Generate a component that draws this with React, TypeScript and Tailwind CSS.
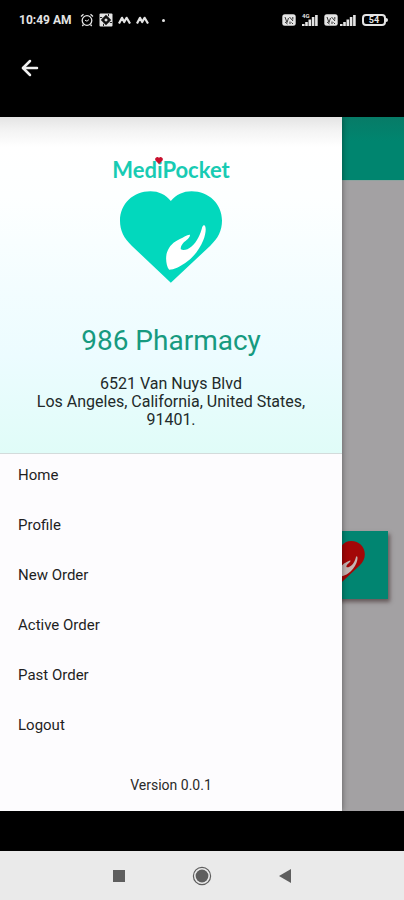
import { ArrowLeft } from "lucide-react";

const MENU_ITEMS = ["Home", "Profile", "New Order", "Active Order", "Past Order", "Logout"];

function HeartHand({ className, handClassName }: { className: string; handClassName: string }) {
  return (
    <svg viewBox="91 153 305 274" className={className} fill="currentColor" aria-hidden="true">
      <path d="M243 182C227 163 207 153 182 153C130 153 91 191 91 241C91 272 103 294 126 316L243 427L361 316C384 294 396 272 396 241C396 191 357 153 305 153C280 153 259 163 243 182Z" />
      <path
        className={handClassName}
        d="M343 255C350 259 348 279 340 300C329 328 309 352 286 368C270 379 253 388 238 388C229 378 226 350 232 335C238 317 251 305 270 296C282 290 292 282 300 283C302 291 290 299 282 306C276 312 271 321 273 327C281 332 295 327 304 319C323 303 331 282 337 260C339 256 341 254 343 255Z"
      />
    </svg>
  );
}

function AlarmIcon() {
  return (
    <svg viewBox="0 0 14 14" className="size-[14px]" fill="none" stroke="currentColor" strokeWidth="1.3">
      <circle cx="7" cy="7.5" r="4.8" />
      <path d="M1 3.5L3.5 1.2M13 3.5L10.5 1.2M3.5 11.5L2.3 13M10.5 11.5L11.7 13" />
      <path d="M5 7.2L7 8.2L9 6.5" strokeWidth="1" />
    </svg>
  );
}

function AppIcon() {
  return (
    <svg viewBox="0 0 14 14" className="size-[14px]">
      <rect x="0.5" y="0.5" width="13" height="13" rx="1" fill="currentColor" />
      <path d="M7 2.8L11.2 7L7 11.2L2.8 7Z" fill="#111" stroke="#111" strokeWidth="1.4" />
      <path d="M7 5.2L8.8 7L7 8.8L5.2 7Z" fill="currentColor" />
      <path d="M1 4.5H3.2M10.8 9.5H13M9.5 1V3.2M4.5 10.8V13" stroke="#111" strokeWidth="0.9" />
    </svg>
  );
}

function WaveIcon() {
  return (
    <svg viewBox="0 0 13 8" className="h-2 w-[13px]" fill="none" stroke="currentColor" strokeWidth="2.2">
      <path d="M1 7.5L4 1.8L6.2 6L8.6 1.8L12 7.5" strokeLinejoin="round" />
    </svg>
  );
}

function VolteIcon() {
  return (
    <svg viewBox="0 0 14 12" className="h-3 w-[14px]">
      <rect x="0.3" y="0.3" width="13.4" height="11.4" rx="2.5" fill="currentColor" />
      <path d="M3 3L5 8.5L6.5 4M3 8L5.5 10M7.5 3L11 7M8 7.5V10M10.8 3V5.5M9.5 8.5L11 10" stroke="#333" fill="none" />
    </svg>
  );
}

function SignalIcon() {
  return (
    <svg viewBox="0 0 16 12" className="h-3 w-4" fill="currentColor">
      <path d="M0 10H2.6V12H0ZM3.2 8H5.8V12H3.2ZM6.5 5.5H9.1V12H6.5ZM9.8 3H12.4V12H9.8ZM13.1 1H15.7V12H13.1Z" />
    </svg>
  );
}

function StatusBar() {
  return (
    <div className="flex h-10 items-center justify-between pr-4 pl-[19px] text-[#e4e4e4]">
      <div className="flex items-center gap-[5px]">
        <span className="mr-1 text-xs font-bold">10:49 AM</span>
        <AlarmIcon />
        <AppIcon />
        <WaveIcon />
        <WaveIcon />
        <span className="ml-2 size-[3px] rounded-full bg-current" />
      </div>
      <div className="flex items-center gap-[2px]">
        <VolteIcon />
        <div className="relative ml-1">
          <SignalIcon />
          <span className="absolute -top-px left-0 text-[6px] leading-[6px] font-bold">4G</span>
        </div>
        <div className="ml-1">
          <VolteIcon />
        </div>
        <SignalIcon />
        <div className="ml-1 flex items-center">
          <span className="flex h-3 w-6 items-center justify-center rounded-[4px] border-2 border-current text-[9px] leading-[9px] font-bold">
            54
          </span>
          <span className="h-1 w-[2px] rounded-r-sm bg-current" />
        </div>
      </div>
    </div>
  );
}

function Wordmark() {
  return (
    <div className="relative font-[Lato] text-[22px] leading-[26px] font-bold text-[#18cbb3]">
      MediPocket
      {/* little heart sits on the dot of the i */}
      <svg viewBox="0 0 8 7" className="absolute top-0 left-[43px] h-[7px] w-2" fill="#c8102e" aria-hidden="true">
        <path d="M4 7L0.7 3.8C-0.8 1.8 1 0 2.4 0C3.2 0 3.7 0.4 4 0.9C4.3 0.4 4.8 0 5.6 0C7 0 8.8 1.8 7.3 3.8Z" />
      </svg>
    </div>
  );
}

function Drawer() {
  return (
    <aside className="z-10 col-start-1 row-start-1 flex w-[342px] max-w-[85%] flex-col bg-[#fdfcfe] shadow-[0_0_6px_rgba(0,0,0,0.45)]">
      <header className="flex flex-col items-center border-b border-[#d3dbdb] bg-[linear-gradient(to_bottom,#e4e4e4_0,#f4f4f4_14px,#fff_30px,#fdffff_80px,#f3fdff_170px,#ecfcff_240px,#e0fcf8_100%)] px-8 pt-10 pb-6 text-center">
        <Wordmark />
        <HeartHand className="mt-2 h-[92px] w-[102px] text-[#02d8bd]" handClassName="fill-white" />
        <h1 className="mt-10 text-[28px] leading-9 text-[#169a80]">986 Pharmacy</h1>
        <address className="mt-4 text-base leading-[18px] text-[#222a2a] not-italic">
          6521 Van Nuys Blvd
          <br />
          Los Angeles, California, United States, 91401.
        </address>
      </header>
      <nav className="flex flex-col gap-2">
        {MENU_ITEMS.map((item) => (
          <button key={item} type="button" className="h-[42px] pl-[18px] text-left text-[15px] text-[#1f1f1f]">
            {item}
          </button>
        ))}
      </nav>
      <p className="mt-auto pb-4 text-center text-sm text-[#2a2a2a]">Version 0.0.1</p>
    </aside>
  );
}

function DimmedPage() {
  return (
    <div className="col-start-1 row-start-1 flex flex-col bg-[#a3a1a3]">
      <div className="h-16 border-b border-[#8fa39f] bg-[linear-gradient(to_bottom,#077b67,#00856f_24px)]" />
      <div className="flex flex-1 flex-col items-end justify-end pr-4 pb-[212px]">
        <div className="flex h-[68px] w-28 items-center justify-center bg-[#018571] pb-2 pl-5 shadow-[2px_3px_4px_rgba(60,40,40,0.6)]">
          <HeartHand className="h-[41px] w-[46px] text-[#a30707]" handClassName="fill-[#c4b4b2]" />
        </div>
      </div>
    </div>
  );
}

function SystemNav() {
  return (
    <footer className="flex h-[49px] justify-center bg-[#eaeaea] text-[#5e5e5e]">
      <button type="button" aria-label="Recent apps" className="flex w-[83px] items-center justify-center">
        <span className="size-3 bg-current" />
      </button>
      <button type="button" aria-label="Home screen" className="flex w-[83px] items-center justify-center">
        <svg viewBox="0 0 20 20" className="size-5" fill="currentColor">
          <circle cx="10" cy="10" r="8.6" fill="none" stroke="currentColor" strokeWidth="1.2" />
          <circle cx="10" cy="10" r="6.4" />
        </svg>
      </button>
      <button type="button" aria-label="Back" className="flex w-[83px] items-center justify-center">
        <svg viewBox="0 0 12 14" className="h-[14px] w-3" fill="currentColor">
          <path d="M0 7L12 0V14Z" />
        </svg>
      </button>
    </footer>
  );
}

export default function App() {
  return (
    <div className="flex min-h-screen flex-col bg-black font-[Roboto,sans-serif]">
      <StatusBar />
      <div className="h-[77px] pt-4 pl-[18px]">
        <button type="button" aria-label="Go back" className="block text-[#f0f0f0]">
          <ArrowLeft size={24} strokeWidth={2.5} />
        </button>
      </div>
      <main className="grid flex-1 grid-cols-1">
        <DimmedPage />
        <Drawer />
      </main>
      <div className="h-10" />
      <SystemNav />
    </div>
  );
}
